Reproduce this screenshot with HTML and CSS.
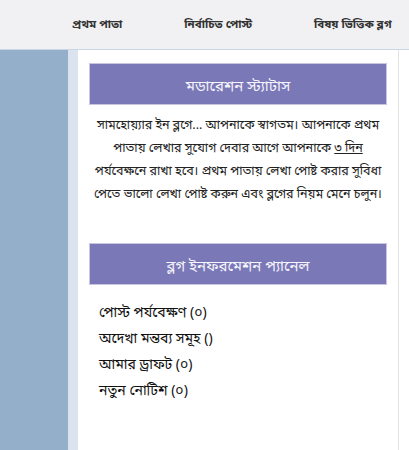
FILE: index.html
```html
<!DOCTYPE html>
<html lang="bn">
<head>
    <meta charset="UTF-8">
    <meta name="viewport" content="width=device-width, initial-scale=1.0">
    <title>সামহোয়্যার ইন ব্লগ</title>
    <link rel="stylesheet" href="styles.css">
</head>
<body>
    <div class="topbar">
        <a href="#" class="nav-link">প্রথম পাতা</a>
        <a href="#" class="nav-link">নির্বাচিত পোস্ট</a>
        <a href="#" class="nav-link">বিষয় ভিত্তিক ব্লগ</a>
    </div>
    <div class="wrap">
        <div class="side"></div>
        <div class="side-strip"></div>
        <div class="content">
            <div class="panel-title">মডারেশন স্ট্যাটাস</div>
            <p class="mod-text">সামহোয়্যার ইন ব্লগে... আপনাকে স্বাগতম। আপনাকে প্রথম পাতায় লেখার সুযোগ দেবার আগে আপনাকে <u>৩ দিন</u> পর্যবেক্ষনে রাখা হবে। প্রথম পাতায় লেখা পোষ্ট করার সুবিধা পেতে ভালো লেখা পোষ্ট করুন এবং ব্লগের নিয়ম মেনে চলুন।</p>

            <div class="panel-title second">ব্লগ ইনফরমেশন প্যানেল</div>
            <ul class="info-list">
                <li>পোস্ট পর্যবেক্ষণ (০)</li>
                <li>অদেখা মন্তব্য সমূহ ()</li>
                <li>আমার ড্রাফট (০)</li>
                <li>নতুন নোটিশ (০)</li>
            </ul>
        </div>
        <div class="rest"></div>
    </div>
</body>
</html>
```

FILE: styles.css
```css
body {
    margin: 0;
    font-family: "Noto Sans Bengali", "Noto Serif Bengali", "Lohit Bengali", "Liberation Serif", serif;
    color: #222;
    background-color: #fff;
}
.topbar {
    height: 49px;
    background-color: #f1f1f3;
    border-bottom: 1px solid #c9d6e4;
    display: flex;
    align-items: center;
    padding-left: 72px;
    gap: 62px;
}
.nav-link {
    color: #333;
    text-decoration: none;
    font-size: 11.5px;
    font-weight: bold;
}
.wrap {
    display: flex;
    height: 400px;
}
.side {
    width: 68px;
    background-color: #94afca;
}
.side-strip {
    width: 10px;
    background-color: #dbe3ef;
}
.content {
    width: 298px;
    padding: 13px 11px 0 11px;
    border-right: 1px solid #e3e3e3;
}
.rest {
    flex: 1;
}
.panel-title {
    background-color: #7b78b8;
    border: 1px solid #cbc3e3;
    color: #f4f4fa;
    height: 42px;
    box-sizing: border-box;
    display: flex;
    align-items: center;
    justify-content: center;
    padding-top: 6px;
    font-size: 15px;
}
.second {
    margin-top: 36px;
}
.mod-text {
    margin: 10px 0 0 0;
    text-align: center;
    font-size: 12.5px;
    line-height: 23px;
}
.mod-text u {
    text-decoration-thickness: 1px;
}
.info-list {
    list-style: none;
    margin: 16px 0 0 0;
    padding: 0 0 0 10px;
}
.info-list li {
    font-size: 14px;
    line-height: 26px;
    color: #111;
}
```
